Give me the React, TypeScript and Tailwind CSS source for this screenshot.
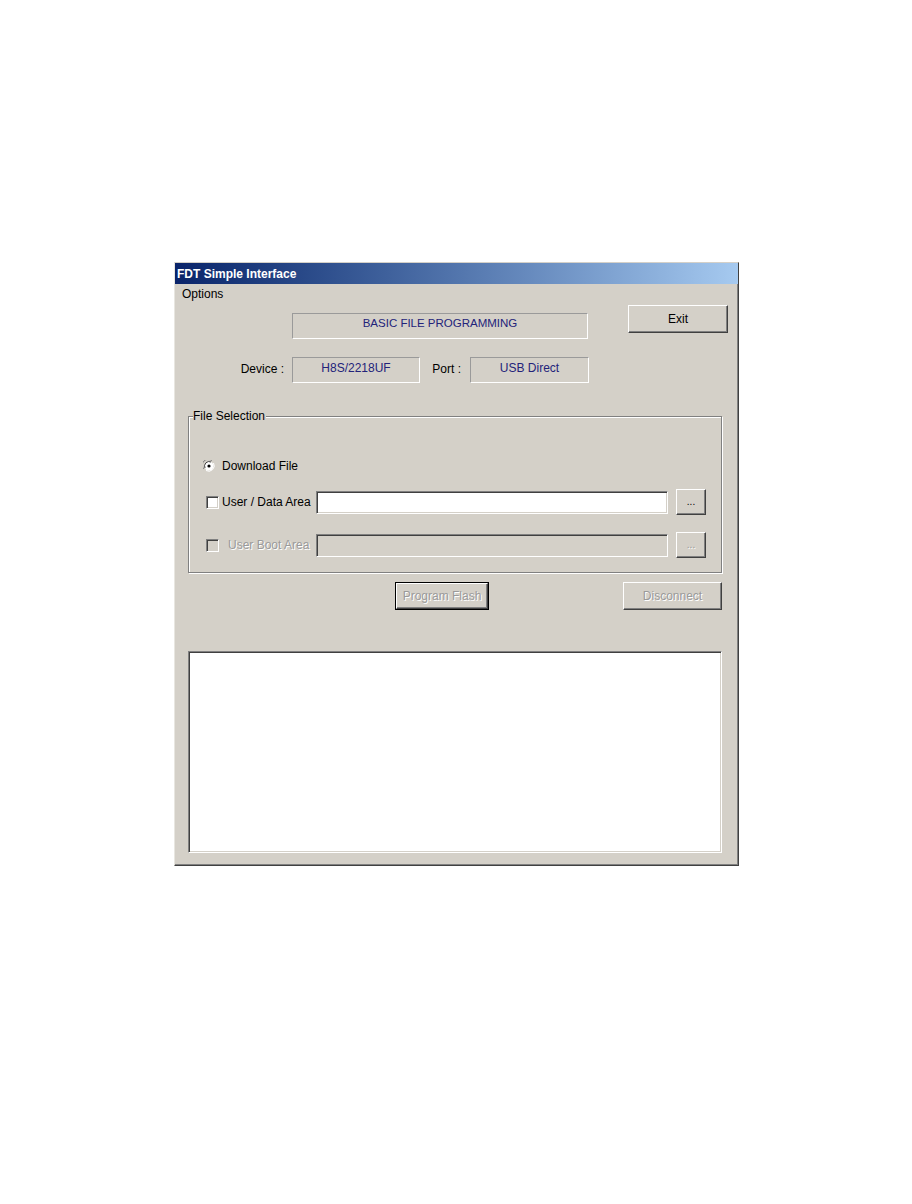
import React from 'react';

const raised =
  'bg-[#d4d0c8] border border-t-white border-l-white border-r-[#404040] border-b-[#404040] shadow-[inset_-1px_-1px_0_#808080]';
const sunken =
  'border border-t-[#808080] border-l-[#808080] border-r-white border-b-white shadow-[inset_1px_1px_0_#404040,inset_-1px_-1px_0_#d4d0c8]';
const statik = 'border border-t-[#9a9a9a] border-l-[#9a9a9a] border-r-white border-b-white';
const disabledText = 'text-[#9a9a9a] [text-shadow:1px_1px_0_#ffffff]';

function Radio() {
  return (
    <svg width="12" height="12" viewBox="0 0 12 12" className="shrink-0">
      <path d="M1 9 A5.5 5.5 0 0 1 9 1" fill="none" stroke="#808080" strokeWidth="1" />
      <circle cx="6" cy="6" r="4.5" fill="#ffffff" />
      <path d="M3 10.5 A5.5 5.5 0 0 0 10.5 3" fill="none" stroke="#ffffff" strokeWidth="1" />
      <path d="M2 8 A4.5 4.5 0 0 1 8 2" fill="none" stroke="#404040" strokeWidth="1" />
      <circle cx="6" cy="6" r="1.6" fill="#000000" />
    </svg>
  );
}

function Checkbox({ disabled = false }: { disabled?: boolean }) {
  return (
    <div
      className={`w-[13px] h-[13px] shrink-0 ${sunken} ${disabled ? 'bg-[#d4d0c8]' : 'bg-white'}`}
    />
  );
}

export default function App() {
  return (
    <div className="w-[912px] h-[1204px] bg-white pt-[262px] pl-[174px] font-['Liberation_Sans',Arial,sans-serif] text-[12px] text-black">
      <div className="w-[565px] h-[604px] bg-[#d4d0c8] border border-t-[#d4d0c8] border-l-[#e8e6e0] border-r-[#404040] border-b-[#404040] shadow-[inset_-1px_-1px_0_#808080] flex flex-col">
        {/* Title bar */}
        <div className="h-[21px] bg-gradient-to-r from-[#0a246a] to-[#a6caf0] flex items-center pl-[2px]">
          <span className="text-white font-bold text-[12px] leading-none">FDT Simple Interface</span>
        </div>

        {/* Menu */}
        <div className="h-[20px] flex items-center pl-[7px]">
          <span>Options</span>
        </div>

        {/* Banner + Exit */}
        <div className="flex items-start pt-[1px]">
          <div
            className={`ml-[117px] mt-[8px] w-[296px] h-[26px] ${statik} flex items-start justify-center pt-[1px] text-[11.5px] text-[#23237a]`}
          >
            BASIC FILE PROGRAMMING
          </div>
          <button className={`ml-[40px] w-[100px] h-[28px] ${raised} flex items-center justify-center`}>
            Exit
          </button>
        </div>

        {/* Device / Port */}
        <div className="flex items-start mt-[18px]">
          <div className="w-[117px] pr-[8px] text-right pt-[3px]">Device :</div>
          <div
            className={`w-[128px] h-[26px] ${statik} flex justify-center pt-[1px] text-[#23237a]`}
          >
            H8S/2218UF
          </div>
          <div className="w-[50px] pr-[9px] text-right pt-[3px]">Port :</div>
          <div
            className={`w-[119px] h-[26px] ${statik} flex justify-center pt-[1px] text-[#23237a]`}
          >
            USB Direct
          </div>
        </div>

        {/* File Selection group */}
        <div className="relative ml-[13px] mt-[33px] w-[534px] h-[157px] border border-[#808080] shadow-[1px_1px_0_#ffffff,inset_1px_1px_0_#ffffff]">
          <span className="absolute -top-[8px] left-[4px] bg-[#d4d0c8] pr-[1px] leading-[14px]">
            File Selection
          </span>

          <div className="flex flex-col pt-[42px]">
            <div className="flex items-center h-[14px] pl-[14px] gap-[7px]">
              <Radio />
              <span>Download File</span>
            </div>

            <div className="flex items-center h-[26px] mt-[16px]">
              <div className="w-[127px] flex items-center pl-[17px] gap-[3px]">
                <Checkbox />
                <span>User / Data Area</span>
              </div>
              <div className={`w-[352px] h-[23px] bg-white ${sunken}`} />
              <button
                className={`ml-[8px] w-[30px] h-[26px] ${raised} flex items-center justify-center text-[10px] leading-none`}
              >
                ...
              </button>
            </div>

            <div className="flex items-center h-[26px] mt-[17px]">
              <div className="w-[127px] flex items-center pl-[17px] gap-[9px]">
                <Checkbox disabled />
                <span className={disabledText}>User Boot Area</span>
              </div>
              <div className={`w-[352px] h-[23px] bg-[#d4d0c8] ${sunken}`} />
              <button
                className={`ml-[8px] w-[30px] h-[26px] ${raised} flex items-center justify-center text-[10px] leading-none ${disabledText}`}
              >
                ...
              </button>
            </div>
          </div>
        </div>

        {/* Action buttons */}
        <div className="flex items-start mt-[9px]">
          <div className="ml-[220px] w-[94px] h-[28px] border border-black">
            <button
              className={`w-full h-full ${raised} flex items-center justify-center ${disabledText}`}
            >
              Program Flash
            </button>
          </div>
          <button
            className={`ml-[134px] w-[99px] h-[28px] ${raised} flex items-center justify-center ${disabledText}`}
          >
            Disconnect
          </button>
        </div>

        {/* Log output */}
        <div className={`ml-[13px] mt-[41px] w-[534px] h-[202px] bg-white ${sunken}`} />
      </div>
    </div>
  );
}
